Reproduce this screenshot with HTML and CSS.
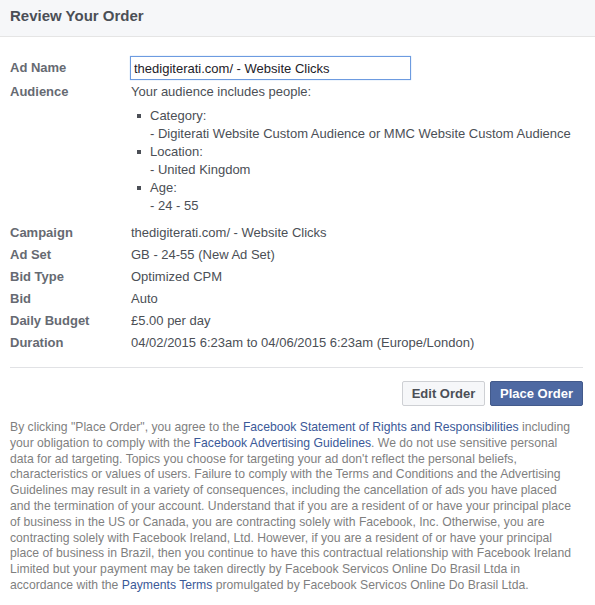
FILE: index.html
```
<!DOCTYPE html>
<html>
<head>
<meta charset="utf-8">
<title>Review Your Order</title>
<link rel="stylesheet" href="styles.css">
</head>
<body>
<div class="header">Review Your Order</div>
<div class="main">
  <div class="row first">
    <div class="label">Ad Name</div>
    <div class="value"><input class="name-input" type="text" value="thedigiterati.com/ - Website Clicks"></div>
  </div>
  <div class="row">
    <div class="label">Audience</div>
    <div class="value">
      <div>Your audience includes people:</div>
      <ul class="aud-list">
        <li>Category:<br>- Digiterati Website Custom Audience or MMC Website Custom Audience</li>
        <li>Location:<br>- United Kingdom</li>
        <li>Age:<br>- 24 - 55</li>
      </ul>
    </div>
  </div>
  <div class="row">
    <div class="label">Campaign</div>
    <div class="value">thedigiterati.com/ - Website Clicks</div>
  </div>
  <div class="row">
    <div class="label">Ad Set</div>
    <div class="value">GB - 24-55 (New Ad Set)</div>
  </div>
  <div class="row">
    <div class="label">Bid Type</div>
    <div class="value">Optimized CPM</div>
  </div>
  <div class="row">
    <div class="label">Bid</div>
    <div class="value">Auto</div>
  </div>
  <div class="row">
    <div class="label">Daily Budget</div>
    <div class="value">£5.00 per day</div>
  </div>
  <div class="row">
    <div class="label">Duration</div>
    <div class="value">04/02/2015 6:23am to 04/06/2015 6:23am (Europe/London)</div>
  </div>

  <div class="sep"></div>

  <div class="buttons">
    <button class="btn btn-edit" type="button">Edit Order</button>
    <button class="btn btn-place" type="button">Place Order</button>
  </div>

  <p class="legal">By clicking "Place Order", you agree to the <a href="#">Facebook Statement of Rights and Responsibilities</a> including your obligation to comply with the <a href="#">Facebook Advertising Guidelines</a>. We do not use sensitive personal data for ad targeting. Topics you choose for targeting your ad don't reflect the personal beliefs, characteristics or values of users. Failure to comply with the Terms and Conditions and the Advertising Guidelines may result in a variety of consequences, including the cancellation of ads you have placed and the termination of your account. Understand that if you are a resident of or have your principal place of business in the US or Canada, you are contracting solely with Facebook, Inc. Otherwise, you are contracting solely with Facebook Ireland, Ltd. However, if you are a resident of or have your principal place of business in Brazil, then you continue to have this contractual relationship with Facebook Ireland Limited but your payment may be taken directly by Facebook Servicos Online Do Brasil Ltda in accordance with the <a href="#">Payments Terms</a> promulgated by Facebook Servicos Online Do Brasil Ltda.</p>
</div>
</body>
</html>
```

FILE: styles.css
```
body {
  margin: 0;
  padding: 0;
  background: #fff;
  font-family: "Liberation Sans", Arial, sans-serif;
  font-size: 13px;
  color: #4b4f56;
}
.header {
  height: 36px;
  line-height: 32px;
  padding: 0 10px;
  background: #f6f7f9;
  border-bottom: 1px solid #e5e5e5;
  font-size: 15px;
  font-weight: bold;
  color: #4b4f56;
}
.main {
  padding: 19px 12px 0 10px;
}
.row {
  display: flex;
  line-height: 22px;
}
.row.first {
  height: 24px;
  margin-bottom: 1px;
  align-items: center;
}
.label {
  width: 121px;
  flex-shrink: 0;
  font-weight: bold;
  color: #666a72;
}
.value {
  flex: 1;
  color: #4b4f56;
}
.name-input {
  box-sizing: border-box;
  width: 281px;
  height: 24px;
  margin: 0 0 0 -1px;
  padding: 0 2px 0 3px;
  border: 1px solid #6d9be0;
  box-shadow: 0 0 1px #9cc0f0;
  font-family: "Liberation Sans", Arial, sans-serif;
  font-size: 13px;
  color: #1d2129;
  outline: none;
}
.aud-list {
  list-style: none;
  margin: 4px 0 7px 0;
  padding: 0;
  line-height: 18px;
}
.aud-list li {
  position: relative;
  padding-left: 19px;
}
.aud-list li::before {
  content: "";
  position: absolute;
  left: 6px;
  top: 7px;
  width: 4px;
  height: 4px;
  background: #4b4f56;
}
.sep {
  height: 1px;
  background: #e1e2e5;
  margin: 13px 0 13px 0;
}
.buttons {
  display: flex;
  justify-content: flex-end;
  gap: 5px;
}
.btn {
  box-sizing: border-box;
  height: 25px;
  padding: 0;
  border-radius: 2px;
  font-family: "Liberation Sans", Arial, sans-serif;
  font-size: 13px;
  font-weight: bold;
  cursor: pointer;
}
.btn-edit {
  width: 83px;
  background: #f6f7f9;
  border: 1px solid #ced0d4;
  color: #4b4f56;
}
.btn-place {
  width: 93px;
  background: #4e69a2;
  border: 1px solid #435a8b;
  color: #fff;
}
.legal {
  margin: 14px 0 0 0;
  padding-right: 6px;
  font-size: 12.2px;
  line-height: 15.8px;
  color: #7f7f7f;
}
.legal a {
  color: #3b5998;
  text-decoration: none;
}
```
